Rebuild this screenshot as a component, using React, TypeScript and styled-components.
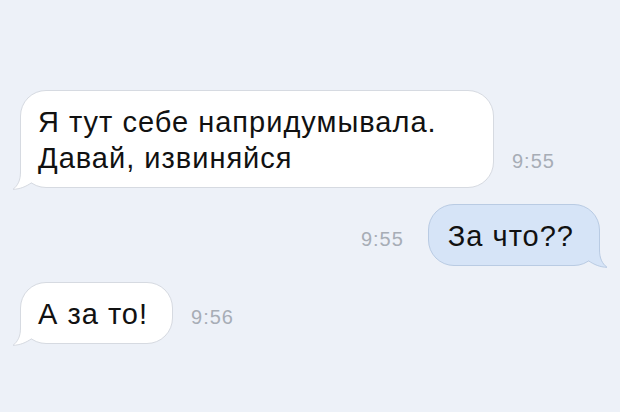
import React from "react";
import styled, {createGlobalStyle} from "styled-components";

const GlobalStyle = createGlobalStyle`
  html, body {
    margin: 0;
    padding: 0;
    background: #edf1f8;
  }
`;

const Chat = styled.div`
  width: 620px;
  height: 412px;
  box-sizing: border-box;
  padding: 90px 20px 0 20px;
  display: flex;
  flex-direction: column;
  gap: 16px;
  font-family: "Liberation Sans", Arial, sans-serif;
  overflow: hidden;
`;

const Row = styled.div<{ $out?: boolean }>`
  display: flex;
  align-items: last baseline;
  justify-content: ${p => (p.$out ? "flex-end" : "flex-start")};
  gap: ${p => (p.$out ? "24px" : "18px")};
`;

const Bubble = styled.div<{ $out?: boolean; $width?: number }>`
  position: relative;
  box-sizing: border-box;
  ${p => (p.$width ? `width: ${p.$width}px;` : "")}
  padding: ${p => (p.$out ? "13px 25px 11px 19px" : "13px 24px 11px 17px")};
  border-radius: 26px;
  border: 1px solid ${p => (p.$out ? "#b9cbe3" : "#d6dae1")};
  background: ${p => (p.$out ? "#d6e4f7" : "#ffffff")};
  color: #111111;
  font-size: 29px;
  line-height: 36px;
  letter-spacing: 1px;
`;

const Text = styled.span`
  position: relative;
  z-index: 1;
`;

const Time = styled.span`
  font-size: 20px;
  line-height: 20px;
  letter-spacing: 1px;
  color: #a7adb6;
`;

const TailSvg = styled.svg<{ $out?: boolean }>`
  position: absolute;
  bottom: -3px;
  width: 30px;
  height: 32px;
  ${p => (p.$out ? "right: -12px; transform: scaleX(-1);" : "left: -12px;")}
`;

const Tail = ({out}: { out?: boolean }) => {
    const fill = out ? "#d6e4f7" : "#ffffff";
    const stroke = out ? "#b9cbe3" : "#d6dae1";
    const edge = "M11.5 0 L11.5 14 C11.5 22 9 27.5 4 31.3 C11 31.2 17 28.5 22.5 24.8";
    return (
        <TailSvg $out={out} viewBox="0 0 30 32">
            <path d={edge + " L22.5 0 Z"} fill={fill}/>
            <path d={edge} fill="none" stroke={stroke} strokeWidth={1}/>
        </TailSvg>
    );
};

interface MessageProps {
    out?: boolean;
    time: string;
    width?: number;
    children: React.ReactNode;
}

const Message = ({out, time, width, children}: MessageProps) => {
    const bubble = (
        <Bubble $out={out} $width={width}>
            <Tail out={out}/>
            <Text>{children}</Text>
        </Bubble>
    );
    return (
        <Row $out={out}>
            {out ? <><Time>{time}</Time>{bubble}</> : <>{bubble}<Time>{time}</Time></>}
        </Row>
    );
};

export default function App() {
    return (
        <>
            <GlobalStyle/>
            <Chat>
                <Message time="9:55" width={474}>
                    Я тут себе напридумывала.<br/>Давай, извиняйся
                </Message>
                <Message out time="9:55">За что??</Message>
                <Message time="9:56">А за то!</Message>
            </Chat>
        </>
    );
}
